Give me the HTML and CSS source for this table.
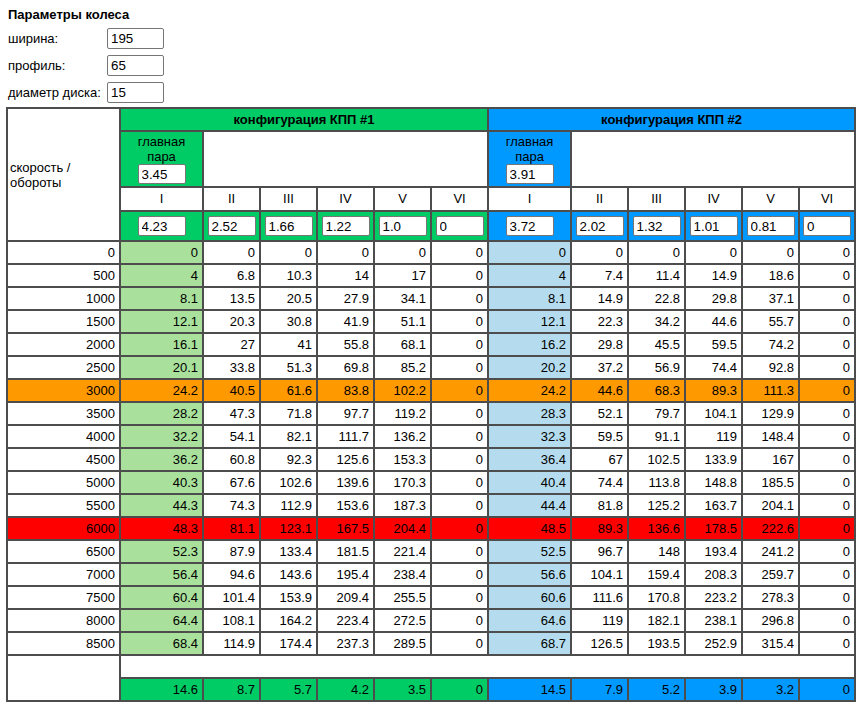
FILE: index.html
```html
<!DOCTYPE html>
<html lang="ru">
<head>
<meta charset="utf-8">
<title>Параметры колеса</title>
<link rel="stylesheet" href="styles.css">
</head>
<body>
<div class="title">Параметры колеса</div>
<div class="params">
  <label>ширина:</label><input type="text" value="195">
  <label>профиль:</label><input type="text" value="65">
  <label>диаметр диска:</label><input type="text" value="15">
</div>
<table class="grid">
  <colgroup>
    <col class="c0">
    <col class="cw"><col class="cn"><col class="cn"><col class="cn"><col class="cn"><col class="cn">
    <col class="cw"><col class="cn"><col class="cn"><col class="cn"><col class="cn"><col class="cl">
  </colgroup>
  <tr>
    <td class="speed" rowspan="4">скорость /<br>обороты</td>
    <td class="head hg" colspan="6">конфигурация КПП #1</td>
    <td class="head hb" colspan="6">конфигурация КПП #2</td>
  </tr>
  <tr>
    <td class="main hg">главная<br>пара<input type="text" value="3.45"></td>
    <td class="empty" colspan="5"></td>
    <td class="main hb">главная<br>пара<input type="text" value="3.91"></td>
    <td class="empty" colspan="5"></td>
  </tr>
  <tr class="gears">
    <td>I</td><td>II</td><td>III</td><td>IV</td><td>V</td><td>VI</td>
    <td>I</td><td>II</td><td>III</td><td>IV</td><td>V</td><td>VI</td>
  </tr>
  <tr class="ratios">
    <td class="hg"><input type="text" value="4.23"></td>
    <td class="hg"><input type="text" value="2.52"></td>
    <td class="hg"><input type="text" value="1.66"></td>
    <td class="hg"><input type="text" value="1.22"></td>
    <td class="hg"><input type="text" value="1.0"></td>
    <td class="hg"><input type="text" value="0"></td>
    <td class="hb"><input type="text" value="3.72"></td>
    <td class="hb"><input type="text" value="2.02"></td>
    <td class="hb"><input type="text" value="1.32"></td>
    <td class="hb"><input type="text" value="1.01"></td>
    <td class="hb"><input type="text" value="0.81"></td>
    <td class="hb"><input type="text" value="0"></td>
  </tr>
  <tr><td>0</td><td class="lg">0</td><td>0</td><td>0</td><td>0</td><td>0</td><td>0</td><td class="lb">0</td><td>0</td><td>0</td><td>0</td><td>0</td><td>0</td></tr>
  <tr><td>500</td><td class="lg">4</td><td>6.8</td><td>10.3</td><td>14</td><td>17</td><td>0</td><td class="lb">4</td><td>7.4</td><td>11.4</td><td>14.9</td><td>18.6</td><td>0</td></tr>
  <tr><td>1000</td><td class="lg">8.1</td><td>13.5</td><td>20.5</td><td>27.9</td><td>34.1</td><td>0</td><td class="lb">8.1</td><td>14.9</td><td>22.8</td><td>29.8</td><td>37.1</td><td>0</td></tr>
  <tr><td>1500</td><td class="lg">12.1</td><td>20.3</td><td>30.8</td><td>41.9</td><td>51.1</td><td>0</td><td class="lb">12.1</td><td>22.3</td><td>34.2</td><td>44.6</td><td>55.7</td><td>0</td></tr>
  <tr><td>2000</td><td class="lg">16.1</td><td>27</td><td>41</td><td>55.8</td><td>68.1</td><td>0</td><td class="lb">16.2</td><td>29.8</td><td>45.5</td><td>59.5</td><td>74.2</td><td>0</td></tr>
  <tr><td>2500</td><td class="lg">20.1</td><td>33.8</td><td>51.3</td><td>69.8</td><td>85.2</td><td>0</td><td class="lb">20.2</td><td>37.2</td><td>56.9</td><td>74.4</td><td>92.8</td><td>0</td></tr>
  <tr class="warn"><td>3000</td><td>24.2</td><td>40.5</td><td>61.6</td><td>83.8</td><td>102.2</td><td>0</td><td>24.2</td><td>44.6</td><td>68.3</td><td>89.3</td><td>111.3</td><td>0</td></tr>
  <tr><td>3500</td><td class="lg">28.2</td><td>47.3</td><td>71.8</td><td>97.7</td><td>119.2</td><td>0</td><td class="lb">28.3</td><td>52.1</td><td>79.7</td><td>104.1</td><td>129.9</td><td>0</td></tr>
  <tr><td>4000</td><td class="lg">32.2</td><td>54.1</td><td>82.1</td><td>111.7</td><td>136.2</td><td>0</td><td class="lb">32.3</td><td>59.5</td><td>91.1</td><td>119</td><td>148.4</td><td>0</td></tr>
  <tr><td>4500</td><td class="lg">36.2</td><td>60.8</td><td>92.3</td><td>125.6</td><td>153.3</td><td>0</td><td class="lb">36.4</td><td>67</td><td>102.5</td><td>133.9</td><td>167</td><td>0</td></tr>
  <tr><td>5000</td><td class="lg">40.3</td><td>67.6</td><td>102.6</td><td>139.6</td><td>170.3</td><td>0</td><td class="lb">40.4</td><td>74.4</td><td>113.8</td><td>148.8</td><td>185.5</td><td>0</td></tr>
  <tr><td>5500</td><td class="lg">44.3</td><td>74.3</td><td>112.9</td><td>153.6</td><td>187.3</td><td>0</td><td class="lb">44.4</td><td>81.8</td><td>125.2</td><td>163.7</td><td>204.1</td><td>0</td></tr>
  <tr class="limit"><td>6000</td><td>48.3</td><td>81.1</td><td>123.1</td><td>167.5</td><td>204.4</td><td>0</td><td>48.5</td><td>89.3</td><td>136.6</td><td>178.5</td><td>222.6</td><td>0</td></tr>
  <tr><td>6500</td><td class="lg">52.3</td><td>87.9</td><td>133.4</td><td>181.5</td><td>221.4</td><td>0</td><td class="lb">52.5</td><td>96.7</td><td>148</td><td>193.4</td><td>241.2</td><td>0</td></tr>
  <tr><td>7000</td><td class="lg">56.4</td><td>94.6</td><td>143.6</td><td>195.4</td><td>238.4</td><td>0</td><td class="lb">56.6</td><td>104.1</td><td>159.4</td><td>208.3</td><td>259.7</td><td>0</td></tr>
  <tr><td>7500</td><td class="lg">60.4</td><td>101.4</td><td>153.9</td><td>209.4</td><td>255.5</td><td>0</td><td class="lb">60.6</td><td>111.6</td><td>170.8</td><td>223.2</td><td>278.3</td><td>0</td></tr>
  <tr><td>8000</td><td class="lg">64.4</td><td>108.1</td><td>164.2</td><td>223.4</td><td>272.5</td><td>0</td><td class="lb">64.6</td><td>119</td><td>182.1</td><td>238.1</td><td>296.8</td><td>0</td></tr>
  <tr><td>8500</td><td class="lg">68.4</td><td>114.9</td><td>174.4</td><td>237.3</td><td>289.5</td><td>0</td><td class="lb">68.7</td><td>126.5</td><td>193.5</td><td>252.9</td><td>315.4</td><td>0</td></tr>
  <tr>
    <td class="foot" rowspan="2"></td>
    <td class="blank" colspan="12"></td>
  </tr>
  <tr>
    <td class="hg">14.6</td><td class="hg">8.7</td><td class="hg">5.7</td><td class="hg">4.2</td><td class="hg">3.5</td><td class="hg">0</td>
    <td class="hb">14.5</td><td class="hb">7.9</td><td class="hb">5.2</td><td class="hb">3.9</td><td class="hb">3.2</td><td class="hb">0</td>
  </tr>
</table>
</body>
</html>
```

FILE: styles.css
```css
* {
  box-sizing: border-box;
}

body {
  margin: 0;
  padding: 7px 6px 0;
  font-family: "Liberation Sans", Arial, sans-serif;
  font-size: 13px;
  color: #000;
  background: #fff;
}

.title {
  margin-left: 2px;
  font-weight: bold;
  line-height: 15px;
}

.params {
  display: grid;
  grid-template-columns: 99px 57px;
  row-gap: 6px;
  align-items: center;
  margin: 6px 0 4px 2px;
}

.params label {
  line-height: 15px;
}

input {
  font: 13.33px "Liberation Sans", Arial, sans-serif;
  color: #000;
  background: #fff;
  border: 1px solid #767676;
  border-radius: 2px;
  padding: 1px 3px;
  margin: 0;
}

.params input {
  width: 57px;
  height: 21px;
}

.grid {
  border-collapse: separate;
  border-spacing: 0;
  border: 1px solid #4d4d4d;
  table-layout: fixed;
  width: 850px;
}

.c0 { width: 113px; }
.cw { width: 83px; }
.cn { width: 57px; }
.cl { width: 56px; }

.grid td {
  border: 1px solid #4d4d4d;
  padding: 0 4px 0 2px;
  line-height: 21px;
  text-align: right;
  white-space: nowrap;
}

.grid input {
  display: block;
  width: 48px;
  height: 20px;
  margin: 0 auto;
  padding: 1px 3px;
}

.grid td.speed {
  text-align: left;
  vertical-align: middle;
  white-space: normal;
  line-height: 15px;
  padding: 0 2px;
}

.grid td.head {
  text-align: center;
  font-weight: bold;
  padding: 0;
}

.grid td.main {
  text-align: center;
  line-height: 15px;
  padding: 2px 0;
}

.grid .gears td {
  text-align: center;
  line-height: 22px;
  padding: 0;
}

.grid .ratios td {
  padding: 4px 0;
  line-height: 20px;
}

.grid td.blank {
  height: 23px;
}

.hg { background: #00cc66; }
.hb { background: #0099ff; }
.lg { background: #a8e09c; }
.lb { background: #b4dcee; }

.warn td { background: #ff9900; }
.limit td { background: #ff0000; }
```
